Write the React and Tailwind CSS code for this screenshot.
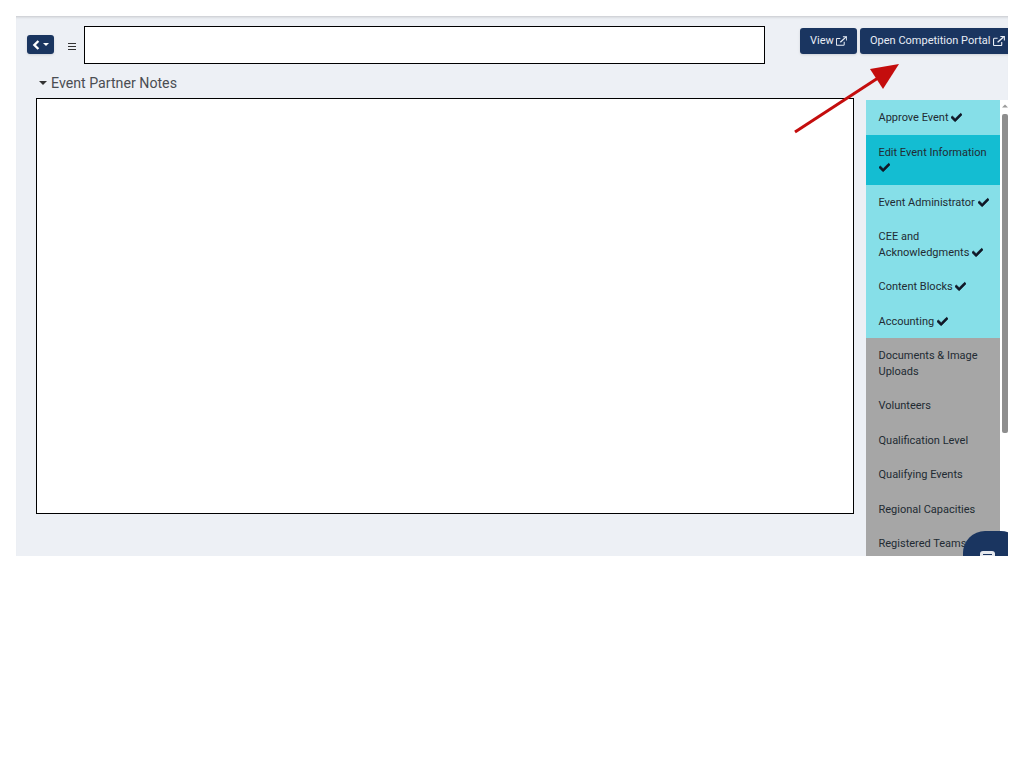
import React from "react";

const steps = [
  { label: "Approve Event", done: true },
  { label: "Edit Event Information", done: true, active: true },
  { label: "Event Administrator", done: true },
  { label: "CEE and Acknowledgments", done: true },
  { label: "Content Blocks", done: true },
  { label: "Accounting", done: true },
  { label: "Documents & Image Uploads" },
  { label: "Volunteers" },
  { label: "Qualification Level" },
  { label: "Qualifying Events" },
  { label: "Regional Capacities" },
  { label: "Registered Teams" },
];

function Check() {
  return (
    <svg viewBox="0 0 512 512" className="inline-block w-[11px] h-[11px] align-[-2px]" fill="#111827" stroke="#111827" strokeWidth="30">
      <path d="M173.9 439.4 7.5 273c-10-10-10-26.2 0-36.2l36.2-36.2c10-10 26.2-10 36.2 0L192 312.7 432.1 72.6c10-10 26.2-10 36.2 0l36.2 36.2c10 10 10 26.2 0 36.2L210.1 439.4c-10 10-26.2 10-36.2 0z" />
    </svg>
  );
}

function LinkIcon() {
  return (
    <svg viewBox="0 0 13 11" className="w-[12px] h-[10px]" fill="none" stroke="#e8edf5" strokeWidth="1.2">
      <path d="M9.5 6.5v3a1 1 0 0 1-1 1h-7a1 1 0 0 1-1-1v-6a1 1 0 0 1 1-1h3.5" />
      <path d="M5 7 11.5 1" strokeWidth="1.5" />
      <path d="M8 .6h4.4V5" />
    </svg>
  );
}

function TopButton({ children, className }) {
  return (
    <button className={"mt-[2px] h-[26px] px-[10px] shrink-0 bg-[#1a3560] text-[#e8edf5] text-[11px] rounded-[3px] shadow-sm flex items-center gap-[2px] whitespace-nowrap " + className}>
      {children}
      <LinkIcon />
    </button>
  );
}

export default function App() {
  return (
    <div className="bg-white min-h-[768px] pt-4 pl-4 font-['Roboto',sans-serif]">
      <div className="relative w-[992px] h-[540px] overflow-hidden bg-[#edf0f5] shadow-[inset_0_3px_3px_-2px_rgba(0,0,0,0.18)]">
        <div className="flex items-start pt-[10px]">
          <button className="ml-[11px] mt-[9px] w-[27px] h-[19px] shrink-0 bg-[#1a3560] rounded-[3px] shadow-sm flex items-center justify-center gap-[3px]">
            <svg viewBox="0 0 10 12" className="w-[8px] h-[10px]" fill="none" stroke="white" strokeWidth="3">
              <path d="M8 1 3 6l5 5" />
            </svg>
            <svg viewBox="0 0 8 4" className="w-[6px] h-[3px]" fill="white">
              <path d="M0 0h8L4 4z" />
            </svg>
          </button>
          <span className="ml-[14px] mt-[17px] w-[8px] h-[7px] shrink-0 border-y border-[#333] flex items-center">
            <span className="w-full h-px bg-[#333]" />
          </span>
          <div className="ml-[8px] w-[681px] h-[38px] shrink-0 bg-white border border-black" />
          <TopButton className="ml-[35px] w-[57px]">View</TopButton>
          <TopButton className="ml-[3px]">Open Competition Portal</TopButton>
        </div>

        <div className="mt-[9px] ml-[23px] flex items-center gap-[4px] text-[14.2px] leading-[20px] text-[#4a4d52]">
          <svg viewBox="0 0 8 4" className="w-[8px] h-[4px]" fill="#333">
            <path d="M0 0h8L4 4z" />
          </svg>
          Event Partner Notes
        </div>

        <div className="flex items-start">
          <div className="ml-[20px] mt-[5px] w-[818px] h-[416px] bg-white border border-black" />
          <div className="ml-[12px] mt-[7px] w-[142px] flex">
            <div className="w-[134px] shrink-0">
              {steps.map((s) => (
                <div
                  key={s.label}
                  className={
                    "pl-[12.5px] pr-[10px] pt-[10px] pb-[9px] text-[11px] leading-[15.5px] text-[#222b33] " +
                    (s.active ? "bg-[#14bdd2]" : s.done ? "bg-[#86dfe8]" : "bg-[#a6a6a6]")
                  }
                >
                  {s.label} {s.done && <Check />}
                </div>
              ))}
            </div>
            <div className="w-[8px] bg-white pl-[2px] flex flex-col items-center">
              <svg viewBox="0 0 8 4" className="w-[6px] h-[4px] mt-[4px]" fill="#9a9a9a">
                <path d="M0 4h8L4 0z" />
              </svg>
              <div className="w-[6px] h-[319px] mt-[6px] bg-[#8e8e8e] rounded-[2px]" />
            </div>
          </div>
        </div>

        <svg className="absolute left-[770px] top-[40px] w-[120px] h-[85px]" viewBox="0 0 120 85">
          <line x1="9" y1="76" x2="92" y2="22" stroke="#c40d0d" strokeWidth="3" />
          <path d="M113 8 84 13 97 33z" fill="#c40d0d" />
        </svg>

        <div className="absolute left-[947px] top-[515px] w-[60px] h-[60px] rounded-[22px] bg-[#1a3560] flex justify-start">
          <div className="ml-[17px] mt-[20px] w-[15px] h-[12px] bg-[#e6e9ee] rounded-[3px] flex flex-col items-center pt-[3px]">
            <span className="w-[9px] h-px bg-[#1a3560]" />
          </div>
        </div>
      </div>
    </div>
  );
}
